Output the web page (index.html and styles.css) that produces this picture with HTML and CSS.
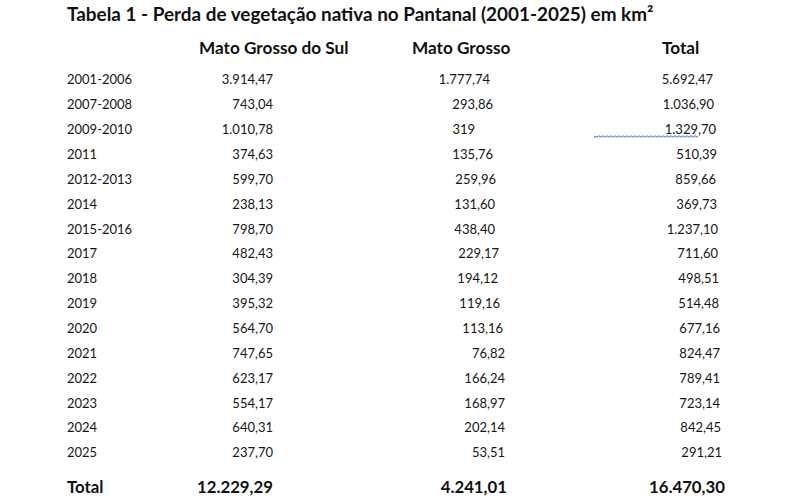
FILE: index.html
```html
<!DOCTYPE html>
<html lang="pt">
<head>
<meta charset="utf-8">
<title>Tabela 1 - Perda de vegetação nativa no Pantanal</title>
<link rel="stylesheet" href="styles.css">
</head>
<body>
<div class="page">
  <h1 class="title">Tabela 1 - Perda de vegetação nativa no Pantanal (2001-2025) em km²</h1>
  <div class="grid head">
    <div></div>
    <div class="h2">Mato Grosso do Sul</div>
    <div class="h3">Mato Grosso</div>
    <div class="h4">Total</div>
  </div>
  <div class="grid body">
    <div class="y">2001-2006</div><div class="ms">3.914,47</div><div class="mg o17">1.777,74</div><div class="tt o12">5.692,47</div>
    <div class="y">2007-2008</div><div class="ms">743,04</div><div class="mg o14">293,86</div><div class="tt o11">1.036,90</div>
    <div class="y">2009-2010</div><div class="ms">1.010,78</div><div class="mg o32">319</div><div class="tt o9"><span class="flag">1.329,70<svg class="squiggle" width="104" height="4" viewBox="0 0 104 4"><path d="M0 3 Q1 0 2 1.5 T4 1.5 T6 1.5 T8 1.5 T10 1.5 T12 1.5 T14 1.5 T16 1.5 T18 1.5 T20 1.5 T22 1.5 T24 1.5 T26 1.5 T28 1.5 T30 1.5 T32 1.5 T34 1.5 T36 1.5 T38 1.5 T40 1.5 T42 1.5 T44 1.5 T46 1.5 T48 1.5 T50 1.5 T52 1.5 T54 1.5 T56 1.5 T58 1.5 T60 1.5 T62 1.5 T64 1.5 T66 1.5 T68 1.5 T70 1.5 T72 1.5 T74 1.5 T76 1.5 T78 1.5 T80 1.5 T82 1.5 T84 1.5 T86 1.5 T88 1.5 T90 1.5 T92 1.5 T94 1.5 T96 1.5 T98 1.5 T100 1.5 T102 1.5 T104 1.5"/></svg></span></div>
    <div class="y">2011</div><div class="ms">374,63</div><div class="mg o14">135,76</div><div class="tt o8">510,39</div>
    <div class="y">2012-2013</div><div class="ms">599,70</div><div class="mg o11">259,96</div><div class="tt o9">859,66</div>
    <div class="y">2014</div><div class="ms">238,13</div><div class="mg o12">131,60</div><div class="tt o8">369,73</div>
    <div class="y">2015-2016</div><div class="ms">798,70</div><div class="mg o12">438,40</div><div class="tt o7">1.237,10</div>
    <div class="y">2017</div><div class="ms">482,43</div><div class="mg o8">229,17</div><div class="tt o7">711,60</div>
    <div class="y">2018</div><div class="ms">304,39</div><div class="mg o9">194,12</div><div class="tt o6">498,51</div>
    <div class="y">2019</div><div class="ms">395,32</div><div class="mg o7">119,16</div><div class="tt o6">514,48</div>
    <div class="y">2020</div><div class="ms">564,70</div><div class="mg o4">113,16</div><div class="tt o5">677,16</div>
    <div class="y">2021</div><div class="ms">747,65</div><div class="mg o2">76,82</div><div class="tt o5">824,47</div>
    <div class="y">2022</div><div class="ms">623,17</div><div class="mg o2">166,24</div><div class="tt o5">789,41</div>
    <div class="y">2023</div><div class="ms">554,17</div><div class="mg o2">168,97</div><div class="tt o5">723,14</div>
    <div class="y">2024</div><div class="ms">640,31</div><div class="mg o2">202,14</div><div class="tt o4">842,45</div>
    <div class="y">2025</div><div class="ms">237,70</div><div class="mg o2">53,51</div><div class="tt o3">291,21</div>
  </div>
  <div class="grid foot">
    <div class="y">Total</div><div class="ms">12.229,29</div><div class="mg">4.241,01</div><div class="tt">16.470,30</div>
  </div>
</div>
</body>
</html>
```
FILE: styles.css
```css
html, body {
  margin: 0;
  padding: 0;
  background: #ffffff;
}
body {
  font-family: "Lato", "Open Sans", sans-serif;
  color: #161616;
  font-size: 13px;
}
.page {
  width: 800px;
  height: 500px;
  padding-left: 67px;
  box-sizing: border-box;
  overflow: hidden;
}
.title {
  margin: 0;
  height: 28px;
  line-height: 28px;
  font-size: 18.9px;
  font-weight: 700;
  color: #111111;
  white-space: nowrap;
}
.grid {
  display: grid;
  grid-template-columns: 132px 213px 250px 138px;
  grid-auto-rows: 24.87px;
  align-items: center;
  line-height: 24.87px;
  white-space: nowrap;
}
.head {
  margin-top: 7.5px;
  font-weight: 700;
  font-size: 17.2px;
  color: #111111;
}
.body {
  margin-top: 7px;
}
.foot {
  margin-top: 10px;
  font-weight: 700;
  font-size: 16.8px;
  color: #111111;
}
.ms, .mg, .tt {
  text-align: right;
  margin-left: -60px;
}
.ms { margin-right: 139px; }
.mg { margin-right: 155px; }
.tt { margin-right: 75px; }
.o2 { padding-right: 2px; }
.o3 { padding-right: 3px; }
.o4 { padding-right: 4px; }
.o5 { padding-right: 5px; }
.o6 { padding-right: 6px; }
.o7 { padding-right: 7px; }
.o8 { padding-right: 8px; }
.o9 { padding-right: 9px; }
.o11 { padding-right: 11px; }
.o12 { padding-right: 12px; }
.o14 { padding-right: 14px; }
.o17 { padding-right: 17px; }
.o32 { padding-right: 32px; }
.flag {
  position: relative;
  display: inline-block;
}
.squiggle {
  position: absolute;
  right: 18px;
  top: 18px;
  fill: none;
  stroke: #3f66d8;
  stroke-width: 1;
}
```
